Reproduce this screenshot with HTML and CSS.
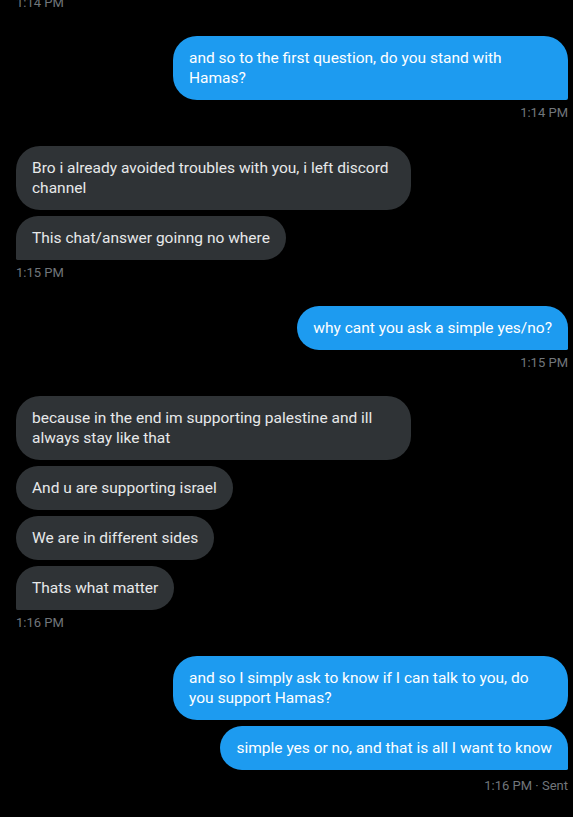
FILE: index.html
```html
<!DOCTYPE html>
<html>
<head>
    <meta charset="utf-8" />
    <meta name="viewport" content="width=device-width, initial-scale=1.0" />
    <title>Messages</title>
    <link rel="stylesheet" href="styles.css">
</head>
<body>
    <div class="chat">
        <div class="time time-top">1:14 PM</div>

        <div class="group sent">
            <div class="bubble">and so to the first question, do you stand with Hamas?</div>
        </div>
        <div class="time right">1:14 PM</div>

        <div class="group received">
            <div class="bubble">Bro i already avoided troubles with you, i left discord channel</div>
            <div class="bubble">This chat/answer goinng no where</div>
        </div>
        <div class="time">1:15 PM</div>

        <div class="group sent">
            <div class="bubble">why cant you ask a simple yes/no?</div>
        </div>
        <div class="time right">1:15 PM</div>

        <div class="group received">
            <div class="bubble">because in the end im supporting palestine and ill always stay like that</div>
            <div class="bubble">And u are supporting israel</div>
            <div class="bubble">We are in different sides</div>
            <div class="bubble">Thats what matter</div>
        </div>
        <div class="time">1:16 PM</div>

        <div class="group sent">
            <div class="bubble">and so I simply ask to know if I can talk to you, do you support Hamas?</div>
            <div class="bubble">simple yes or no, and that is all I want to know</div>
        </div>
        <div class="time right time-last">1:16 PM · Sent</div>
    </div>
</body>
</html>
```

FILE: styles.css
```css
body {
    margin: 0;
    background: #000;
    font-family: Roboto, "Noto Sans", sans-serif;
    overflow: hidden;
}
.chat {
    display: flex;
    flex-direction: column;
    padding: 0 5px 0 16px;
}
.group {
    display: flex;
    flex-direction: column;
    gap: 6px;
}
.sent {
    align-items: flex-end;
}
.received {
    align-items: flex-start;
}
.bubble {
    max-width: 363px;
    padding: 12px 16px;
    font-size: 15.5px;
    line-height: 20px;
    border-radius: 24px;
}
.sent .bubble {
    background: #1d9bf0;
    color: #fff;
}
.received .bubble {
    background: #2f3336;
    color: #e7e9ea;
}
.sent .bubble:last-child {
    border-bottom-right-radius: 2px;
}
.received .bubble:last-child {
    border-bottom-left-radius: 2px;
}
.time {
    margin: 5px 0 25px;
    font-size: 13px;
    line-height: 16px;
    color: #71767b;
}
.time.right {
    text-align: right;
}
.time-top {
    margin-top: -5px;
}
.time-last {
    margin-top: 8px;
}
```
